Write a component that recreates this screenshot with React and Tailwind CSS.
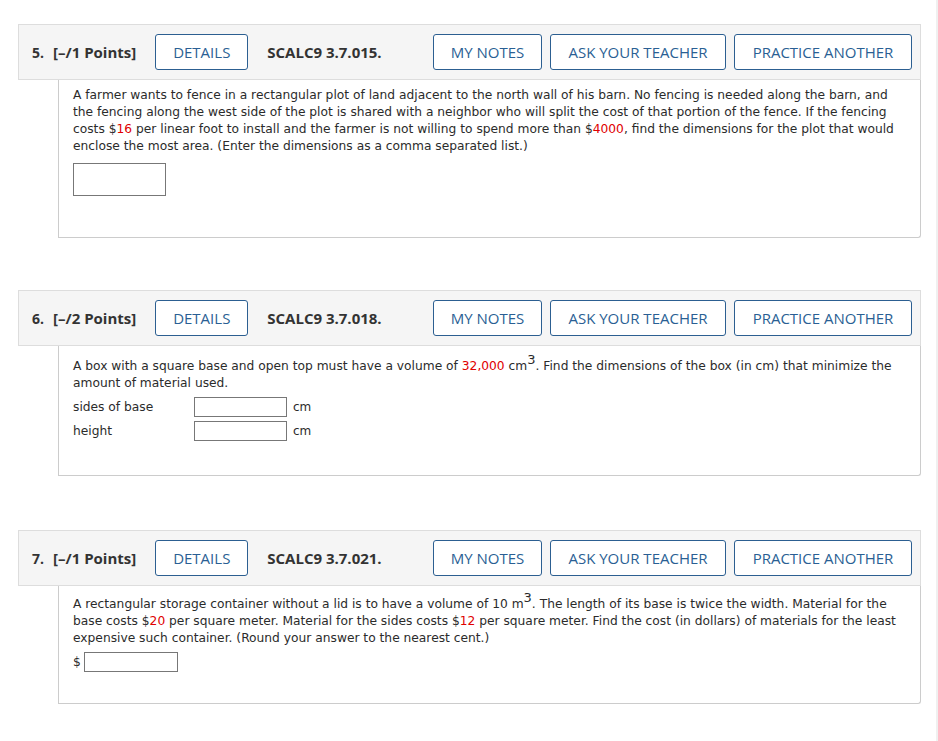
const Red = ({ children }) => <span className="text-[#e00000]">{children}</span>;

const Header = ({ num, points, code }) => (
  <div className="flex items-center h-[56px] bg-[#f5f5f5] border border-[#dddddd] pl-[13px] pr-[8px] font-['Open_Sans',sans-serif] text-[#333333]">
    <span className="text-[14px] font-bold">{num}.</span>
    <span className="ml-[9px] text-[15px] font-bold">[–/{points} Points]</span>
    <button className="ml-[19px] w-[93px] h-[36px] border border-[#2c5f91] rounded-[3px] bg-white text-[15px] font-medium text-[#2a5f94]">
      DETAILS
    </button>
    <span className="ml-[19px] text-[15px] font-bold">{code}</span>
    <div className="ml-auto flex gap-[8px]">
      <button className="w-[109px] h-[36px] border border-[#2c5f91] rounded-[3px] bg-white text-[15px] font-medium text-[#2a5f94]">
        MY NOTES
      </button>
      <button className="w-[176px] h-[36px] border border-[#2c5f91] rounded-[3px] bg-white text-[15px] font-medium text-[#2a5f94]">
        ASK YOUR TEACHER
      </button>
      <button className="w-[178px] h-[36px] border border-[#2c5f91] rounded-[3px] bg-white text-[15px] font-medium text-[#2a5f94]">
        PRACTICE ANOTHER
      </button>
    </div>
  </div>
);

const Box = ({ className = "" }) => (
  <input type="text" className={"border border-[#777777] bg-white outline-none " + className} />
);

export default function App() {
  return (
    <div className="flex min-h-[741px] bg-white">
      <div className="w-[936px] pt-[24px] pl-[18px] pr-[15px]">
        {/* QUESTION 5 */}
        <Header num="5" points="1" code="SCALC9 3.7.015." />
        <div className="ml-[40px] border border-t-0 border-[#cccccc] rounded-br-[3px] px-[14px] pt-[7px] pb-[41px] font-['DejaVu_Sans',Verdana,sans-serif] text-[12.25px] leading-[17px] text-[#2b2b2b]">
          <p>
            A farmer wants to fence in a rectangular plot of land adjacent to the north wall of his barn. No fencing is needed along the barn, and the fencing along the west side of the plot is shared with a neighbor who will split the cost of that portion of the fence. If the fencing costs $<Red>16</Red> per linear foot to install and the farmer is not willing to spend more than $<Red>4000</Red>, find the dimensions for the plot that would enclose the most area. (Enter the dimensions as a comma separated list.)
          </p>
          <Box className="mt-[8px] w-[93px] h-[33px] block" />
        </div>

        {/* QUESTION 6 */}
        <div className="mt-[52px]">
          <Header num="6" points="2" code="SCALC9 3.7.018." />
          <div className="ml-[40px] border border-t-0 border-[#cccccc] rounded-br-[3px] px-[14px] pt-[12px] pb-[34px] font-['DejaVu_Sans',Verdana,sans-serif] text-[12.25px] leading-[17px] text-[#2b2b2b]">
            <p>
              A box with a square base and open top must have a volume of <Red>32,000</Red> cm<sup className="text-[13px] -top-[6px]">3</sup>. Find the dimensions of the box (in cm) that minimize the amount of material used.
            </p>
            <div className="mt-[5px] flex flex-col gap-[4px]">
              <div className="flex items-center">
                <span className="w-[121px]">sides of base</span>
                <Box className="w-[93px] h-[20px]" />
                <span className="ml-[6px] text-[12px]">cm</span>
              </div>
              <div className="flex items-center">
                <span className="w-[121px]">height</span>
                <Box className="w-[93px] h-[20px]" />
                <span className="ml-[6px] text-[12px]">cm</span>
              </div>
            </div>
          </div>
        </div>

        {/* QUESTION 7 */}
        <div className="mt-[54px]">
          <Header num="7" points="1" code="SCALC9 3.7.021." />
          <div className="ml-[40px] border border-t-0 border-[#cccccc] rounded-br-[3px] px-[14px] pt-[10px] pb-[31px] font-['DejaVu_Sans',Verdana,sans-serif] text-[12.25px] leading-[17px] text-[#2b2b2b]">
            <p>
              A rectangular storage container without a lid is to have a volume of 10 m<sup className="text-[13px] -top-[6px]">3</sup>. The length of its base is twice the width. Material for the base costs $<Red>20</Red> per square meter. Material for the sides costs $<Red>12</Red> per square meter. Find the cost (in dollars) of materials for the least expensive such container. (Round your answer to the nearest cent.)
            </p>
            <div className="mt-[5px] flex items-center">
              <span className="mr-[3px]">$</span>
              <Box className="w-[94px] h-[20px]" />
            </div>
          </div>
        </div>
      </div>
      <div className="w-[2px] bg-[#f0f0f0]" />
    </div>
  );
}
